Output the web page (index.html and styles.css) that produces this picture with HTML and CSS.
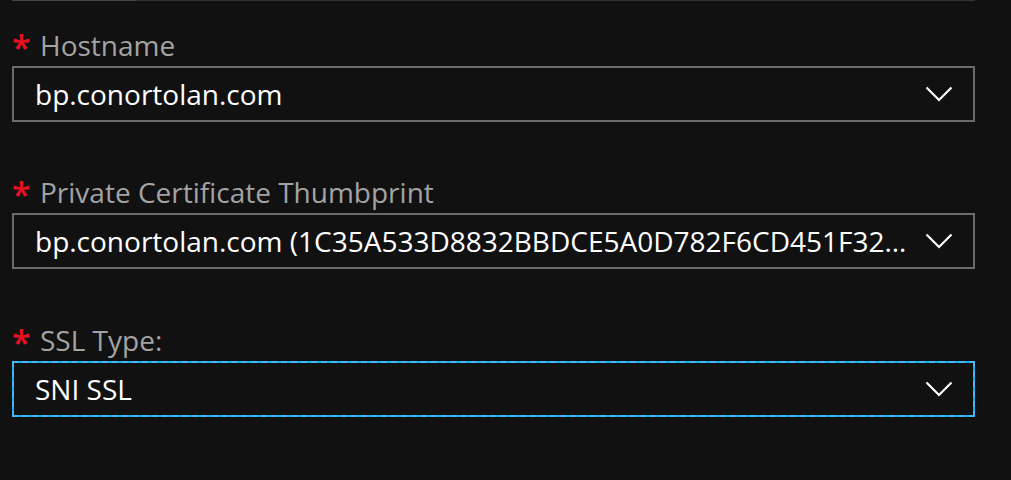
FILE: index.html
```html
<!DOCTYPE html>
<html>
<head>
<meta charset="utf-8">
<link rel="stylesheet" href="styles.css">
</head>
<body>
<div class="page">
  <div class="topline"><span class="seg-a"></span><span class="seg-b"></span></div>
  <div class="field">
    <div class="label"><span class="req">*</span><span class="label-text">Hostname</span></div>
    <div class="select">
      <span class="value">bp.conortolan.com</span>
      <svg class="chev" width="28" height="16" viewBox="0 0 28 16"><polyline points="1.5,1.5 14,14 26.5,1.5" fill="none" stroke="#ffffff" stroke-width="2.2"/></svg>
    </div>
  </div>
  <div class="field">
    <div class="label"><span class="req">*</span><span class="label-text">Private Certificate Thumbprint</span></div>
    <div class="select">
      <span class="value" title="bp.conortolan.com (1C35A533D8832BBDCE5A0D782F6CD451F32E8C7A)">bp.conortolan.com (1C35A533D8832BBDCE5A0D782F6CD451F32E8C7A)</span>
      <svg class="chev" width="28" height="16" viewBox="0 0 28 16"><polyline points="1.5,1.5 14,14 26.5,1.5" fill="none" stroke="#ffffff" stroke-width="2.2"/></svg>
    </div>
  </div>
  <div class="field last">
    <div class="label"><span class="req">*</span><span class="label-text">SSL Type:</span></div>
    <div class="select focused">
      <span class="value">SNI SSL</span>
      <svg class="chev" width="28" height="16" viewBox="0 0 28 16"><polyline points="1.5,1.5 14,14 26.5,1.5" fill="none" stroke="#ffffff" stroke-width="2.2"/></svg>
    </div>
  </div>
</div>
</body>
</html>
```
FILE: styles.css
```css
html, body {
  margin: 0;
  padding: 0;
  background: #111111;
  height: 100%;
}
body {
  font-family: "Open Sans", "Noto Sans", sans-serif;
  color: #ffffff;
}
.page {
  width: 963px;
  padding-left: 12px;
}
.topline {
  display: flex;
  height: 1px;
}
.seg-a {
  width: 124px;
  background: #474747;
}
.seg-b {
  flex: 1;
  background: #333333;
}
.field {
  margin-top: 24px;
}
.field + .field {
  margin-top: 50px;
}
.field.last {
  margin-top: 51px;
}
.label {
  display: flex;
  align-items: baseline;
  height: 36px;
  line-height: 36px;
  margin-bottom: 5px;
}
.req {
  color: #e81123;
  font-size: 34px;
  font-weight: 600;
  width: 28px;
  position: relative;
  top: 4px;
}
.label-text {
  color: #a3a3a3;
  font-size: 28px;
}
.select {
  box-sizing: border-box;
  height: 56px;
  border: 2px solid #6b6b6b;
  display: flex;
  align-items: center;
  padding: 0 20px 0 21px;
}
.select.focused {
  border-color: #08b4f2;
  outline: 2px dashed #4fb3f6;
  outline-offset: -2px;
}
.value {
  flex: 1;
  min-width: 0;
  white-space: nowrap;
  overflow: hidden;
  text-overflow: ellipsis;
  font-size: 28px;
}
.chev {
  flex: none;
  margin-left: 6px;
}
```
